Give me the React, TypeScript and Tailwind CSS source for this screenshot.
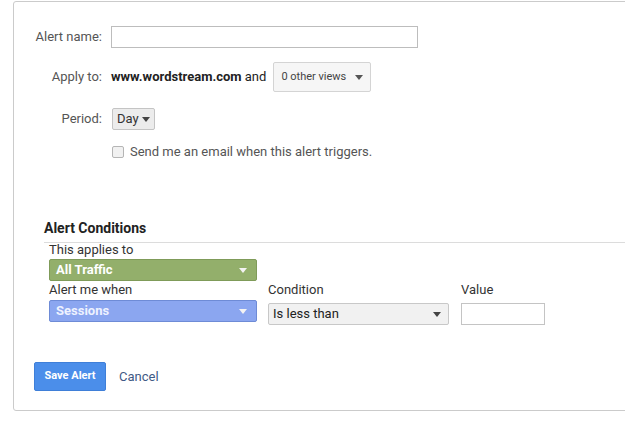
import React from 'react';

function Caret({ color = '#555' }: { color?: string }) {
  return (
    <svg width="8" height="5" viewBox="0 0 8 5" className="shrink-0">
      <path d="M0 0h8L4 5z" fill={color} />
    </svg>
  );
}

export default function App() {
  return (
    <div className="w-[625px] h-[421px] overflow-hidden bg-white font-['Roboto',sans-serif] text-[13px]">
      <div className="ml-[13px] mt-[1px] w-[640px] h-[410px] border border-[#cbcbcb] rounded-[3px] pt-[24px]">
        {/* alert form */}
        <div className="flex flex-col">
          <div className="flex items-center h-[22px]">
            <div className="w-[88px] text-right text-[#555]">Alert name:</div>
            <input className="ml-[9px] w-[307px] h-[22px] border border-[#bdbdbd] outline-none" />
          </div>
          <div className="flex items-center h-[30px] mt-[14px]">
            <div className="w-[88px] text-right text-[#555]">Apply to:</div>
            <div className="ml-[9px] text-[#222]">
              <span className="font-bold">www.wordstream.com</span> and
            </div>
            <button className="ml-[7px] w-[98px] h-[30px] border border-[#d4d4d4] rounded-[2px] bg-[#f6f6f6] flex items-center justify-between px-[7px] text-[11px] text-[#444]">
              <span>0 other views</span>
              <Caret />
            </button>
          </div>
          <div className="flex items-center h-[22px] mt-[16px]">
            <div className="w-[88px] text-right text-[#555]">Period:</div>
            <button className="ml-[10px] h-[22px] w-[43px] border border-[#c4c4c4] rounded-[2px] bg-[#ececec] flex items-center gap-[3px] px-[4px] text-[#333]">
              <span>Day</span>
              <Caret color="#444" />
            </button>
          </div>
          <label className="flex items-center h-[14px] mt-[15px] ml-[98px] text-[#555]">
            <span className="w-[12px] h-[12px] border border-[#b5b5b5] rounded-[2px] bg-[#f1f1f1]" />
            <span className="ml-[6px]">Send me an email when this alert triggers.</span>
          </label>
        </div>

        {/* conditions */}
        <div className="mt-[59px] ml-[30px]">
          <div className="border-b border-[#dcdcdc] pb-[3px] text-[14px] font-bold text-[#222]">Alert Conditions</div>
          <div className="ml-[5px] mt-[-1px] text-[#333]">
            <div className="leading-[16px]">This applies to</div>
            <button className="mt-[1px] w-[208px] h-[22px] rounded-[2px] border border-[#7f9b59] bg-[#93af6b] flex items-center justify-between px-[6px] pr-[9px] text-white font-bold">
              <span>All Traffic</span>
              <Caret color="#f3f3f3" />
            </button>
            <div className="flex mt-[1px]">
              <div className="w-[219px]">
                <div className="leading-[16px]">Alert me when</div>
                <button className="mt-[2px] w-[208px] h-[22px] rounded-[2px] border border-[#6e8bd6] bg-[#8ba6f0] flex items-center justify-between px-[6px] pr-[9px] text-[#eef2ff] font-bold">
                  <span>Sessions</span>
                  <Caret color="#f3f3f3" />
                </button>
              </div>
              <div className="w-[193px]">
                <div className="leading-[16px]">Condition</div>
                <button className="mt-[5px] w-[181px] h-[22px] rounded-[2px] border border-[#c8c8c8] bg-[#f1f1f1] flex items-center justify-between px-[4px] pr-[7px] text-[#222]">
                  <span>Is less than</span>
                  <Caret color="#444" />
                </button>
              </div>
              <div>
                <div className="leading-[16px]">Value</div>
                <input className="mt-[5px] w-[84px] h-[22px] border border-[#c4c4c4] outline-none" />
              </div>
            </div>
          </div>
        </div>

        {/* actions */}
        <div className="flex items-center mt-[37px] ml-[20px]">
          <button className="w-[72px] h-[29px] rounded-[2px] bg-[#4b8eea] border border-[#3f7fd8] text-white text-[11px] font-bold">
            Save Alert
          </button>
          <span className="ml-[13px] text-[#3f5a86]">Cancel</span>
        </div>
      </div>
    </div>
  );
}
